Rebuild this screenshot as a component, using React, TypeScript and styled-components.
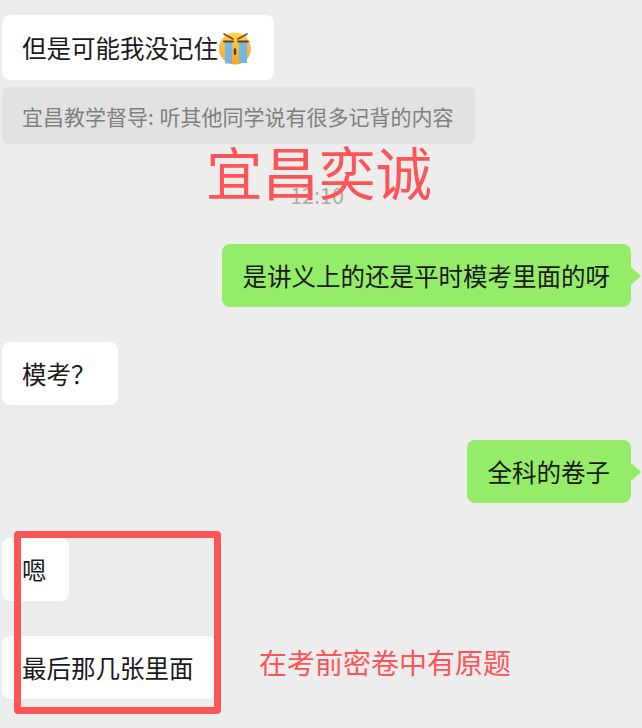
import React from 'react';
import styled, { createGlobalStyle } from 'styled-components';

const cjk = `"Noto Sans CJK SC", "Noto Sans", sans-serif`;
const red = '#fb5557';

const GlobalStyle = createGlobalStyle`
  html, body {
    margin: 0;
    padding: 0;
    background: #ededed;
  }
`;

const Page = styled.div`
  position: relative;
  width: 642px;
  height: 728px;
  overflow: hidden;
  box-sizing: border-box;
  padding: 15px 11px 0 2px;
  display: flex;
  flex-direction: column;
  background: #ededed;
  font-family: ${cjk};
`;

const Bubble = styled.div<{ $mine?: boolean; $top: number; $tall?: boolean }>`
  position: relative;
  align-self: ${({ $mine }) => ($mine ? 'flex-end' : 'flex-start')};
  display: flex;
  align-items: center;
  height: ${({ $tall }) => ($tall ? 65 : 63)}px;
  margin-top: ${({ $top }) => $top}px;
  padding: ${({ $mine }) => ($mine ? '0 21px' : '0 22px 0 20px')};
  border-radius: 8px;
  box-sizing: border-box;
  font-size: 24.5px;
  line-height: 34px;
  white-space: nowrap;
  color: #1a1a1a;
  background: ${({ $mine }) => ($mine ? '#95ec69' : '#ffffff')};

  ${({ $mine }) =>
    $mine &&
    `
      &::after {
        content: '';
        position: absolute;
        top: 50%;
        right: -10px;
        margin-top: -9px;
        border-style: solid;
        border-width: 9px 0 9px 10px;
        border-color: transparent transparent transparent #95ec69;
      }
    `}
`;

const Quote = styled.div`
  align-self: flex-start;
  height: 57px;
  margin-top: 7px;
  padding: 0 21px 0 20px;
  border-radius: 6px;
  box-sizing: border-box;
  display: flex;
  align-items: center;
  font-size: 21px;
  word-spacing: 1px;
  white-space: nowrap;
  color: #7f7f7f;
  background: #e2e2e2;
`;

const Time = styled.div`
  align-self: center;
  height: 30px;
  margin: 36px 0 0 1px;
  font-size: 21.5px;
  line-height: 30px;
  color: #ababab;
`;

const Watermark = styled.div`
  position: absolute;
  left: 206px;
  top: 130px;
  font-size: 56.5px;
  line-height: 80px;
  white-space: nowrap;
  color: ${red};
`;

const Frame = styled.div`
  position: absolute;
  left: 14px;
  top: 531px;
  width: 207px;
  height: 183px;
  box-sizing: border-box;
  border: 7px solid ${red};
  border-radius: 4px;
`;

const Note = styled.div`
  position: absolute;
  left: 259px;
  top: 642px;
  font-size: 28px;
  line-height: 40px;
  white-space: nowrap;
  color: ${red};
`;

const Emoji = styled.svg`
  flex: none;
  width: 34px;
  height: 34px;
`;

const CryingFace = () => (
  <Emoji viewBox="0 0 34 34">
    <defs>
      <linearGradient id="face" x1="0" y1="0" x2="0" y2="1">
        <stop offset="0" stopColor="#ffd25a" />
        <stop offset="1" stopColor="#f6a623" />
      </linearGradient>
    </defs>
    <circle cx="17" cy="17.5" r="16" fill="url(#face)" />
    <path d="M7 10 H14 V32.5 H7 Z" fill="#74b6e6" />
    <path d="M21 10 H29 V32 H21 Z" fill="#74b6e6" />
    <path d="M6 3 L15 8 M29 3 L20 8" stroke="#7a4a12" strokeWidth="1.6" strokeLinecap="round" fill="none" />
    <path d="M6 10.5 H15 M20 10.5 H30" stroke="#6b4310" strokeWidth="1.8" strokeLinecap="round" fill="none" />
    <ellipse cx="17" cy="20.5" rx="1.4" ry="3.5" fill="#6b3d10" />
  </Emoji>
);

export default function App() {
  return (
    <>
      <GlobalStyle />
      <Page>
        <Bubble $tall $top={0}>
          但是可能我没记住
          <CryingFace />
        </Bubble>
        <Quote>宜昌教学督导: 听其他同学说有很多记背的内容</Quote>
        <Time>12:10</Time>
        <Bubble $mine $top={34}>是讲义上的还是平时模考里面的呀</Bubble>
        <Bubble $top={35}>模考？</Bubble>
        <Bubble $mine $top={35}>全科的卷子</Bubble>
        <Bubble $top={35}>嗯</Bubble>
        <Bubble $top={35}>最后那几张里面</Bubble>
        <Watermark>宜昌奕诚</Watermark>
        <Frame />
        <Note>在考前密卷中有原题</Note>
      </Page>
    </>
  );
}
